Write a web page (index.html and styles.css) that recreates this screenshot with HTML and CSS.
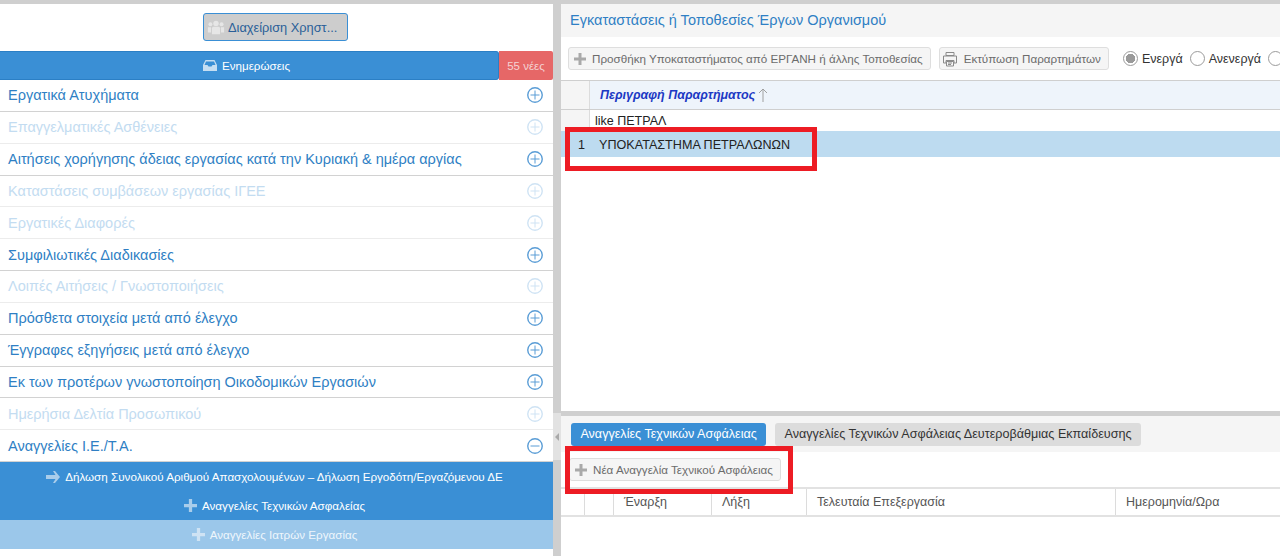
FILE: index.html
```html
<!DOCTYPE html>
<html lang="el">
<head>
<meta charset="utf-8">
<title>Εγκαταστάσεις</title>
<link rel="stylesheet" href="styles.css">
</head>
<body>
<svg class="defs" width="0" height="0" aria-hidden="true">
  <symbol id="i-plus" viewBox="0 0 12 12"><path d="M4.500 0h3v4.500h4.500v3H7.500V12h-3V7.500H0v-3h4.500z"/></symbol>
  <symbol id="i-open" viewBox="0 0 18 18"><circle cx="9" cy="9" r="7.250" fill="none" stroke="currentColor" stroke-width="1.400"/><path d="M9 4.500v9M4.500 9h9" fill="none" stroke="currentColor"/></symbol>
  <symbol id="i-close" viewBox="0 0 18 18"><circle cx="9" cy="9" r="7.250" fill="none" stroke="currentColor" stroke-width="1.400"/><path d="M4.500 9h9" fill="none" stroke="currentColor"/></symbol>
</svg>
<header class="topbar"><span class="topbar-text">ΥΠΟΥΡΓΕΙΟ ΕΡΓΑΣΙΑΣ &amp; ΚΟΙΝΩΝΙΚΗΣ ΑΣΦΑΛΙΣΗΣ</span></header>
<div class="layout">
  <aside class="side">
    <div class="side-top">
      <button class="user-btn">
        <svg class="users-ico" viewBox="0 0 20 16"><circle cx="10" cy="4" r="3"/><circle cx="3.800" cy="5" r="2.200"/><circle cx="16.200" cy="5" r="2.200"/><path d="M5.500 9.500Q5.500 7.800 7.500 7.800h5Q14.500 7.800 14.500 9.500V16h-9z"/><path d="M1 8.200h3.500v6H1zM15.500 8.200H19v6h-3.500z"/></svg>
        Διαχείριση Χρηστ...
      </button>
    </div>
    <div class="news">
      <div class="news-main">
        <svg class="inbox-ico" viewBox="0 0 14 11"><path d="M2.500 0h9L14 5v6H0V5zM3 1.500L1.500 5H4.500L5.500 6.500h3L9.500 5h3L11 1.500z" fill-rule="evenodd"/></svg>
        Ενημερώσεις
      </div>
      <div class="news-count">55 νέες</div>
    </div>
    <ul class="menu">
      <li class="row">Εργατικά Ατυχήματα<svg class="toggle"><use href="#i-open"/></svg></li>
      <li class="row off">Επαγγελματικές Ασθένειες<svg class="toggle"><use href="#i-open"/></svg></li>
      <li class="row">Αιτήσεις χορήγησης άδειας εργασίας κατά την Κυριακή &amp; ημέρα αργίας<svg class="toggle"><use href="#i-open"/></svg></li>
      <li class="row off">Καταστάσεις συμβάσεων εργασίας ΙΓΕΕ<svg class="toggle"><use href="#i-open"/></svg></li>
      <li class="row off">Εργατικές Διαφορές<svg class="toggle"><use href="#i-open"/></svg></li>
      <li class="row">Συμφιλιωτικές Διαδικασίες<svg class="toggle"><use href="#i-open"/></svg></li>
      <li class="row off">Λοιπές Αιτήσεις / Γνωστοποιήσεις<svg class="toggle"><use href="#i-open"/></svg></li>
      <li class="row">Πρόσθετα στοιχεία μετά από έλεγχο<svg class="toggle"><use href="#i-open"/></svg></li>
      <li class="row">Έγγραφες εξηγήσεις μετά από έλεγχο<svg class="toggle"><use href="#i-open"/></svg></li>
      <li class="row">Εκ των προτέρων γνωστοποίηση Οικοδομικών Εργασιών<svg class="toggle"><use href="#i-open"/></svg></li>
      <li class="row off">Ημερήσια Δελτία Προσωπικού<svg class="toggle"><use href="#i-open"/></svg></li>
      <li class="row">Αναγγελίες Ι.Ε./Τ.Α.<svg class="toggle"><use href="#i-close"/></svg></li>
    </ul>
    <div class="sub">
      <svg class="sub-ico" viewBox="0 0 14 12"><path d="M7 0h2l5 6-5 6H7l2.500-4H0V4h9.500z"/></svg>
      Δήλωση Συνολικού Αριθμού Απασχολουμένων – Δήλωση Εργοδότη/Εργαζόμενου ΔΕ
    </div>
    <div class="sub"><svg class="sub-ico plus"><use href="#i-plus"/></svg>Αναγγελίες Τεχνικών Ασφαλείας</div>
    <div class="sub sub-off"><svg class="sub-ico plus"><use href="#i-plus"/></svg>Αναγγελίες Ιατρών Εργασίας</div>
  </aside>

  <div class="vsplit"><span class="vhandle"><i class="arrow"></i></span></div>

  <main class="content">
    <section class="pane-top">
      <h1 class="title">Εγκαταστάσεις ή Τοποθεσίες Έργων Οργανισμού</h1>
      <div class="toolbar">
        <button class="tool-btn"><svg class="tool-ico"><use href="#i-plus"/></svg>Προσθήκη Υποκαταστήματος από ΕΡΓΑΝΗ ή άλλης Τοποθεσίας</button>
        <button class="tool-btn tool-print">
          <svg class="print-ico" viewBox="0 0 16 16"><path d="M4 1.500h8v3H4zM1.500 5h13v7H12V9.500H4V12H1.500zM4.500 10.500h7v4.500h-7zM6 12h4M6 13.500h3" fill="none" stroke="currentColor"/></svg>
          Εκτύπωση Παραρτημάτων
        </button>
        <div class="radios">
          <span class="radio on"></span><span class="radio-label">Ενεργά</span>
          <span class="radio"></span><span class="radio-label">Ανενεργά</span>
          <span class="radio"></span>
        </div>
      </div>
      <div class="grid-head">
        <div class="gutter"></div>
        <div class="head-cell">Περιγραφή Παραρτήματος<svg class="sort" viewBox="0 0 10 14"><path d="M5 14V1M1 5l4-4 4 4" fill="none" stroke="currentColor"/></svg></div>
      </div>
      <div class="filter-row"><div class="gutter"></div><div class="filter-cell">like ΠΕΤΡΑΛ</div></div>
      <div class="data-row"><span class="data-num">1</span>ΥΠΟΚΑΤΑΣΤΗΜΑ ΠΕΤΡΑΛΩΝΩΝ</div>
      <div class="mark mark-top"></div>
    </section>
    <div class="hsplit"></div>
    <section class="pane-bottom">
      <div class="tabs">
        <span class="tab active">Αναγγελίες Τεχνικών Ασφάλειας</span>
        <span class="tab">Αναγγελίες Τεχνικών Ασφάλειας Δευτεροβάθμιας Εκπαίδευσης</span>
      </div>
      <div class="toolbar-low">
        <button class="tool-btn"><svg class="tool-ico"><use href="#i-plus"/></svg>Νέα Αναγγελία Τεχνικού Ασφάλειας</button>
      </div>
      <div class="low-head">
        <div class="lh c1"></div>
        <div class="lh c2"></div>
        <div class="lh c3">Έναρξη</div>
        <div class="lh c4">Λήξη</div>
        <div class="lh c5">Τελευταία Επεξεργασία</div>
        <div class="lh c6">Ημερομηνία/Ωρα</div>
      </div>
      <div class="mark mark-low"></div>
    </section>
  </main>
</div>
</body>
</html>
```
FILE: styles.css
```css
* { box-sizing: border-box; }
html, body { margin: 0; height: 100%; overflow: hidden; }
body { font-family: "Liberation Sans", Arial, sans-serif; background: #fff; color: #333; }
button { font-family: inherit; cursor: pointer; }
ul { margin: 0; padding: 0; list-style: none; }
.defs { position: absolute; }

.topbar { height: 4px; background: #cfcfcf; overflow: hidden; padding-left: 378px; }
.topbar-text { display: block; color: #fff; font-size: 9.500px; line-height: 12px; margin-top: -9px; white-space: nowrap; }

.layout { display: flex; height: 552px; }

.side { width: 553px; flex: none; overflow: hidden; }
.side-top { height: 47px; display: flex; justify-content: center; padding: 9px 2px 0 0; }
.user-btn { width: 145px; height: 28px; padding: 0 0 0 3px; background: #cdcdcd; border: 1px solid #3a8fd5; border-radius: 3px; color: #2a5f98; font-size: 12.800px; display: flex; align-items: center; gap: 3px; white-space: nowrap; }
.users-ico { width: 18px; height: 16px; fill: #e6e6e6; flex: none; }

.news { height: 29px; display: flex; }
.news-main { flex: 1; background: #3a8fd5; border: 1px solid #2b7fc5; border-width: 1px 1px 1px 0; border-radius: 0 3px 3px 0; color: #fff; font-size: 11.600px; display: flex; align-items: center; justify-content: center; gap: 5px; padding-right: 5px; }
.inbox-ico { width: 14px; height: 11px; fill: #c6def2; }
.news-count { width: 54px; background: #e66767; color: #f4d3d3; font-size: 11.500px; border-radius: 0 2px 2px 0; display: flex; align-items: center; justify-content: center; }

.row { height: 31.850px; display: flex; align-items: center; justify-content: space-between; padding: 0 9px 0 8px; border-bottom: 1px solid #d2d2d2; color: #2f7fc4; font-size: 14.500px; }
.row.off { color: #c3dcf1; border-bottom-color: #ececec; }
.toggle { width: 18px; height: 18px; color: #5a9dd6; }
.row.off .toggle { color: #cfe3f4; }

.sub { height: 29px; background: #3a8fd5; color: #fff; font-size: 11.650px; display: flex; align-items: center; justify-content: center; gap: 5px; padding-right: 4px; }
.sub-off { background: #9bc7ea; color: #eef6fc; }
.sub-ico { width: 14px; height: 12px; fill: #a9cdeb; flex: none; }
.sub-ico.plus { width: 13px; height: 13px; }
.sub-off .sub-ico { fill: #cfe3f4; }

.vsplit { width: 8px; flex: none; background: #cfcfcf; display: flex; flex-direction: column; justify-content: flex-end; padding-bottom: 96px; }
.vhandle { height: 47px; background: #e2e2e2; display: flex; align-items: center; padding-left: 2px; }
.arrow { border: 4px solid transparent; border-right: 4px solid #a9a9a9; border-left: 0; }

.content { flex: 1; min-width: 0; display: flex; flex-direction: column; }
.pane-top { height: 407px; position: relative; overflow: hidden; }
.title { margin: 0; height: 33px; background: #f5f5f5; color: #2f7fc4; font-size: 14.500px; font-weight: 400; line-height: 33px; padding-left: 9px; white-space: nowrap; }

.toolbar { height: 43px; display: flex; align-items: center; padding: 0 0 0 7px; gap: 8px; white-space: nowrap; overflow: hidden; }
.tool-btn { height: 23px; padding: 0 7px 0 5px; background: #f5f5f5; border: 1px solid #dedede; border-radius: 3px; color: #6c6c6c; font-size: 11.650px; display: flex; align-items: center; gap: 6px; white-space: nowrap; flex: none; }
.tool-print { padding-left: 2px; }
.tool-ico { width: 12px; height: 12px; fill: #a9a9a9; flex: none; }
.print-ico { width: 16px; height: 16px; color: #8a8a8a; flex: none; }
.radios { display: flex; align-items: center; margin-left: 6px; color: #333; font-size: 12.500px; }
.radio { width: 15px; height: 15px; border: 1px solid #9b9b9b; border-radius: 50%; background: #fff; flex: none; margin-right: 4px; }
.radio.on { background: radial-gradient(circle, #9a9a9a 0 4.500px, #fff 5px); }
.radio-label { margin-right: 7px; }

.grid-head { height: 30px; display: flex; background: #eef4fb; border-top: 1px solid #cfcfcf; border-bottom: 1px solid #cfcfcf; }
.gutter { width: 29px; flex: none; background: #f5f5f5; border-right: 1px solid #dcdcdc; }
.head-cell { padding-left: 10px; display: flex; align-items: center; font-size: 12.500px; font-weight: 700; font-style: italic; color: #1c39c4; }
.sort { width: 10px; height: 14px; color: #a0a0a0; margin-left: 3px; }
.filter-row { height: 21px; display: flex; }
.filter-cell { padding-left: 5px; font-size: 12.500px; color: #222; line-height: 22px; }
.data-row { height: 26px; background: #bddbf0; font-size: 12.600px; color: #222; display: flex; align-items: center; padding: 1px 0 0 17px; }
.data-num { width: 21px; flex: none; }

.mark { position: absolute; border: 5px solid #ed1c24; pointer-events: none; }
.mark-top { left: 4px; top: 123px; width: 252px; height: 44px; }

.hsplit { height: 5px; flex: none; background: #cfcfcf; }
.pane-bottom { flex: 1; position: relative; overflow: hidden; }
.tabs { height: 36px; background: #f5f5f5; display: flex; gap: 9px; padding: 7px 0 0 10px; }
.tab { height: 23px; padding: 0 9.400px; border-radius: 3px; background: #dcdcdc; color: #333; font-size: 12.600px; line-height: 23px; white-space: nowrap; }
.tab.active { background: #3a8fd5; color: #fff; }
.toolbar-low { height: 35px; padding: 6px 0 0 8px; }
.low-head { height: 30px; display: grid; grid-template-columns: 24px 29px 98px 95px 309px 1fr; border-top: 2px solid #e2e2e2; border-bottom: 2px solid #e2e2e2; font-size: 12.500px; color: #555; }
.lh { border-right: 1px solid #dcdcdc; padding-left: 10px; line-height: 26px; }
.c6 { border-right: 0; }
.mark-low { left: 4px; top: 30px; width: 228px; height: 48px; }
```
